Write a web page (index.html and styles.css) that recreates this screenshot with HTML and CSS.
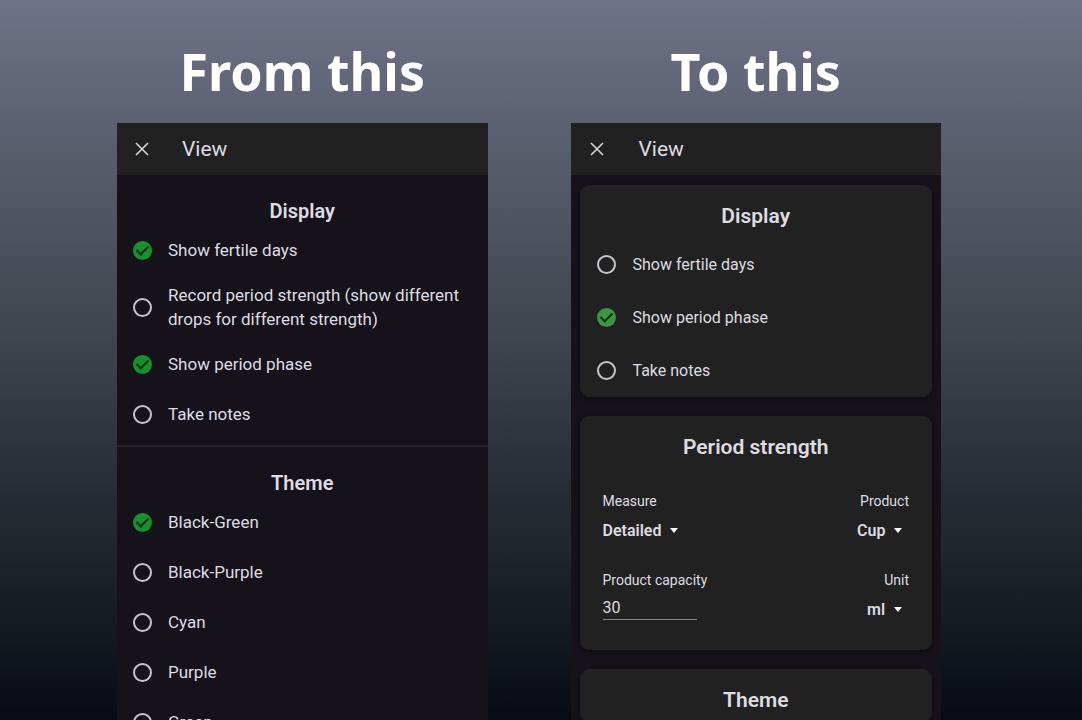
FILE: index.html
```html
<!DOCTYPE html>
<html lang="en">
<head>
    <meta charset="UTF-8">
    <meta name="viewport" content="width=device-width, initial-scale=1.0">
    <title>View settings: before and after</title>
    <link rel="stylesheet" href="styles.css">
</head>
<body>

    <main class="compare">
        <!-- Old layout: flat list -->
        <section class="side">
            <h1 class="caption">From this</h1>
            <div class="phone">
                <header class="topbar">
                    <button class="close" type="button" aria-label="Close">
                        <svg width="14" height="14" viewBox="0 0 14 14"><path d="M1 1l12 12M13 1l-12 12"/></svg>
                    </button>
                    <h2>View</h2>
                </header>

                <div class="group">
                    <h3>Display</h3>
                    <label class="option"><input type="checkbox" checked><span>Show fertile days</span></label>
                    <label class="option tall"><input type="checkbox"><span>Record period strength (show different drops for different strength)</span></label>
                    <label class="option"><input type="checkbox" checked><span>Show period phase</span></label>
                    <label class="option"><input type="checkbox"><span>Take notes</span></label>
                </div>

                <div class="group">
                    <h3>Theme</h3>
                    <label class="option"><input type="radio" name="theme" checked><span>Black-Green</span></label>
                    <label class="option"><input type="radio" name="theme"><span>Black-Purple</span></label>
                    <label class="option"><input type="radio" name="theme"><span>Cyan</span></label>
                    <label class="option"><input type="radio" name="theme"><span>Purple</span></label>
                    <label class="option"><input type="radio" name="theme"><span>Green</span></label>
                </div>
            </div>
        </section>

        <!-- New layout: cards -->
        <section class="side">
            <h1 class="caption">To this</h1>
            <div class="phone phone-new">
                <header class="topbar">
                    <button class="close" type="button" aria-label="Close">
                        <svg width="14" height="14" viewBox="0 0 14 14"><path d="M1 1l12 12M13 1l-12 12"/></svg>
                    </button>
                    <h2>View</h2>
                </header>

                <div class="cards">
                    <div class="card">
                        <h3>Display</h3>
                        <label class="option"><input type="checkbox"><span>Show fertile days</span></label>
                        <label class="option"><input type="checkbox" checked><span>Show period phase</span></label>
                        <label class="option"><input type="checkbox"><span>Take notes</span></label>
                    </div>

                    <div class="card">
                        <h3>Period strength</h3>
                        <div class="fields">
                            <div class="field">
                                <label for="measure">Measure</label>
                                <div class="dropdown">
                                    <select id="measure"><option>Detailed</option></select>
                                    <svg width="8" height="5" viewBox="0 0 8 5"><path d="M0 0h8L4 5z"/></svg>
                                </div>
                            </div>
                            <div class="field end">
                                <label for="product">Product</label>
                                <div class="dropdown">
                                    <select id="product"><option>Cup</option></select>
                                    <svg width="8" height="5" viewBox="0 0 8 5"><path d="M0 0h8L4 5z"/></svg>
                                </div>
                            </div>
                            <div class="field">
                                <label for="capacity">Product capacity</label>
                                <input id="capacity" type="text" inputmode="numeric" value="30">
                            </div>
                            <div class="field end">
                                <label for="unit">Unit</label>
                                <div class="dropdown">
                                    <select id="unit"><option>ml</option></select>
                                    <svg width="8" height="5" viewBox="0 0 8 5"><path d="M0 0h8L4 5z"/></svg>
                                </div>
                            </div>
                        </div>
                    </div>

                    <div class="card">
                        <h3>Theme</h3>
                    </div>
                </div>
            </div>
        </section>
    </main>

</body>
</html>
```
FILE: styles.css
```css
* {
    margin: 0;
    padding: 0;
    box-sizing: border-box;
}

body {
    background: linear-gradient(to bottom, #6f7387, #64687b 10%, #4e5460 31%, #3e424c 49%, #2b303a 64%, #20252a 77%, #080b14);
    color: #dedce2;
    font-family: Roboto, sans-serif;
    height: 100vh;
    overflow: hidden;
}

.compare {
    display: grid;
    grid-template-columns: 1fr 1fr;
    gap: 83px;
    height: 100%;
    padding: 35px 141px 0 117px;
}

.side {
    display: flex;
    flex-direction: column;
    gap: 16px;
    min-height: 0;
}

.caption {
    flex: none;
    color: #fff;
    font-family: "Noto Sans", sans-serif;
    font-size: 52px;
    font-weight: 700;
    line-height: 72px;
    text-align: center;
}

.phone {
    flex: 1;
    min-height: 0;
    overflow: hidden;
    background: #15121a;
}

/* Top bar */
.topbar {
    display: flex;
    align-items: center;
    gap: 33px;
    height: 52px;
    padding: 0 18px;
    background: #212121;
}

.topbar h2 {
    font-size: 21px;
    font-weight: 400;
}

.close {
    display: flex;
    border: none;
    background: none;
    cursor: pointer;
}

.close path {
    stroke: #d6d6d6;
    stroke-width: 1.6;
}

h3 {
    font-size: 20px;
    font-weight: 600;
    line-height: 28px;
    text-align: center;
}

/* Flat list */
.group {
    padding: 22px 0 6px;
}

.group + .group {
    border-top: 2px solid #26232b;
}

.option {
    display: flex;
    align-items: center;
    gap: 16px;
    height: 50px;
    padding: 0 16px;
    font-size: 17px;
    line-height: 24px;
    cursor: pointer;
}

.option.tall {
    height: 64px;
}

.option input {
    appearance: none;
    flex: none;
    display: flex;
    justify-content: center;
    width: 19px;
    height: 19px;
    border: 2px solid #c6c4cb;
    border-radius: 50%;
}

.option input:checked {
    border: none;
    background: #17902f;
}

/* Tick mark */
.option input:checked::after {
    content: "";
    box-sizing: border-box;
    width: 7px;
    height: 12px;
    margin-top: 2px;
    border: solid #0c3416;
    border-width: 0 2px 2px 0;
    transform: rotate(45deg);
}

/* Cards */
.phone-new .topbar {
    gap: 35px;
    padding: 0 19px;
}

.cards {
    display: flex;
    flex-direction: column;
    gap: 19px;
    padding: 10px 9px;
}

.card {
    border-radius: 9px;
    background: #212121;
    box-shadow: 0 2px 5px rgba(0, 0, 0, 0.4);
}

.card h3 {
    padding: 17px 0 8px;
    font-size: 21px;
}

.card .option {
    gap: 17px;
    height: 53px;
    padding: 0 17px;
    font-size: 16px;
}

.card .option input:checked {
    background: #3f9445;
}

.fields {
    display: grid;
    grid-template-columns: 1fr 1fr;
    gap: 21px;
    padding: 22px 23px;
}

.field {
    display: flex;
    flex-direction: column;
    align-items: flex-start;
    height: 58px;
}

.field.end {
    align-items: flex-end;
}

.field label {
    font-size: 14px;
    line-height: 20px;
}

.field.end .dropdown {
    padding-right: 7px;
}

.dropdown {
    display: flex;
    align-items: center;
    gap: 8px;
    height: 38px;
}

.dropdown select {
    appearance: none;
    border: none;
    background: none;
    color: inherit;
    font: 600 16px Roboto, sans-serif;
}

.dropdown svg {
    fill: #fff;
}

.field input {
    width: 94px;
    height: 30px;
    padding: 8px 0 2px;
    border: none;
    border-bottom: 1px solid #858585;
    background: none;
    color: inherit;
    font: 16px Roboto, sans-serif;
}
```
